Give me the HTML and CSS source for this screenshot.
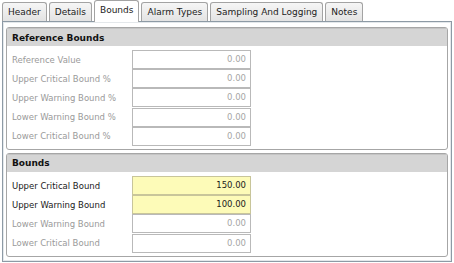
FILE: index.html
```html
<!doctype html>
<html>
<head>
<meta charset="UTF-8">
<title>Bounds</title>
<link rel="stylesheet" href="styles.css">
</head>
<body>
<div class="tabs">
	<a class="tab">Header</a>
	<a class="tab">Details</a>
	<a class="tab on">Bounds</a>
	<a class="tab">Alarm Types</a>
	<a class="tab">Sampling And Logging</a>
	<a class="tab">Notes</a>
</div>
<div class="panel">
	<div class="group">
		<div class="group-head">Reference Bounds</div>
		<div class="rows">
			<div class="row off"><label>Reference Value</label><span class="box">0.00</span></div>
			<div class="row off"><label>Upper Critical Bound %</label><span class="box">0.00</span></div>
			<div class="row off"><label>Upper Warning Bound %</label><span class="box">0.00</span></div>
			<div class="row off"><label>Lower Warning Bound %</label><span class="box">0.00</span></div>
			<div class="row off"><label>Lower Critical Bound %</label><span class="box">0.00</span></div>
		</div>
	</div>
	<div class="group">
		<div class="group-head">Bounds</div>
		<div class="rows">
			<div class="row"><label>Upper Critical Bound</label><span class="box req">150.00</span></div>
			<div class="row"><label>Upper Warning Bound</label><span class="box req">100.00</span></div>
			<div class="row off"><label>Lower Warning Bound</label><span class="box">0.00</span></div>
			<div class="row off"><label>Lower Critical Bound</label><span class="box">0.00</span></div>
		</div>
	</div>
</div>
</body>
</html>
```

FILE: styles.css
```css
*{ margin:0; padding:0; box-sizing:border-box; }
body{ background:#fff; font-family:"DejaVu Sans", Verdana, sans-serif; font-size:8.5px; color:#1a1a1a; width:454px; height:263px; overflow:hidden; }

.tabs{ display:flex; align-items:flex-end; gap:2px; padding-left:2px; height:22px; }
.tab{ display:flex; align-items:center; justify-content:center; height:19px; padding:0 5px; border:1px solid #a3a3a3; border-bottom:none; border-radius:3px 3px 0 0; background:linear-gradient(#f6f6f6,#e3e3e3); color:#222; font-size:9px; position:relative; top:-1px; }
.tab.on{ height:22px; top:0; background:#fff; z-index:1; padding:0 5px 3px; }

.panel{ margin:-1px 2px 0; height:241px; border:1px solid #8d9aa5; box-shadow:inset 0 0 0 1px #e4e8eb; padding:5px 3px 2px; display:flex; flex-direction:column; gap:3px; }
.group{ border:1px solid #a6a6a6; border-radius:3px; padding:0 0 3px; }
.group-head{ height:18px; background:#d5d5d5; border-top:1px solid #c4c4c4; font-weight:bold; font-size:9px; color:#111; padding-left:5px; display:flex; align-items:center; }
.rows{ display:flex; flex-direction:column; padding:4px 0 0 4px; }
.row{ display:flex; align-items:center; height:19.2px; }
.row label{ width:121px; padding-left:1px; }
.row.off label{ color:#9a9a9a; }
.box{ width:119px; height:19px; border:1px solid #b9b9b9; background:#fff; text-align:right; padding-right:4px; line-height:17px; color:#1a1a1a; }
.row.off .box{ color:#a6a6a6; }
.box.req{ background:#fdfbb8; border-color:#c8c59a; }
```
